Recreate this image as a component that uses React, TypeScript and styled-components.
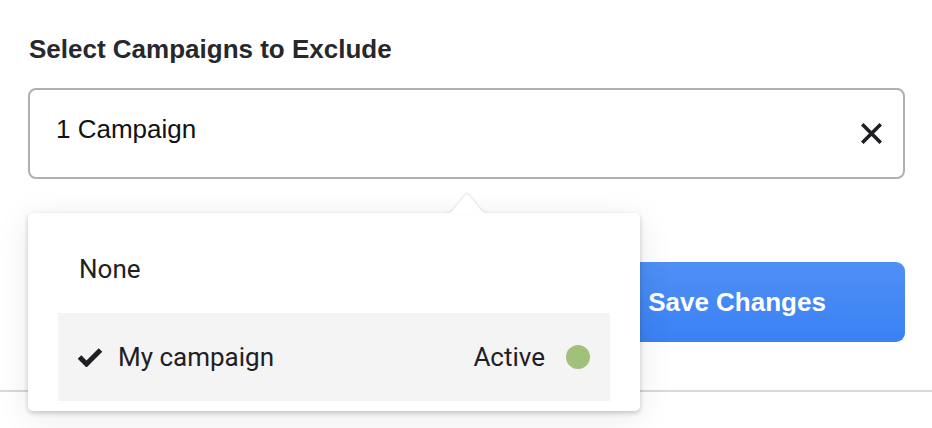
import styled, { createGlobalStyle } from 'styled-components'

const GlobalStyle = createGlobalStyle`
    html, body {
        margin: 0;
        padding: 0;
        background: #fff;
    }
    body {
        font-family: 'Liberation Sans', Arial, sans-serif;
        width: 932px;
        height: 428px;
        overflow: hidden;
    }
`
const Page = styled.div`
    display: flex;
    flex-direction: column;
`
const Content = styled.div`
    display: flex;
    flex-direction: column;
    padding: 34px 27px 0 28px;
`
const Heading = styled.h2`
    margin: 0 0 0 1px;
    font-family: 'Liberation Sans', Arial, sans-serif;
    font-weight: 700;
    font-size: 26px;
    line-height: 30px;
    color: #27282d;
`
const Field = styled.div`
    position: relative;
    margin-top: 24px;
`
const InputBox = styled.div`
    box-sizing: border-box;
    height: 91px;
    display: flex;
    align-items: center;
    justify-content: space-between;
    padding: 0 21px 0 26px;
    border: 2px solid #b0b0b0;
    border-radius: 8px;
    background: #fff;
`
const Value = styled.span`
    font-family: 'Liberation Sans', Arial, sans-serif;
    font-size: 26px;
    color: #111;
    margin-bottom: 8px;
`
const ClearButton = styled.button`
    display: flex;
    padding: 0;
    border: 0;
    background: none;
    cursor: pointer;
`
const Popover = styled.div`
    position: absolute;
    z-index: 2;
    left: 0;
    top: 125px;
    width: 612px;
    box-sizing: border-box;
    padding: 12px 30px 10px;
    background: #fff;
    border-radius: 5px;
    box-shadow: 0 2px 5px rgba(0, 0, 0, 0.2), 0 6px 34px rgba(0, 0, 0, 0.09);
`
const Caret = styled.svg`
    position: absolute;
    left: 416px;
    top: -21px;
    filter: drop-shadow(0 -1px 1px rgba(0, 0, 0, 0.12));
`
const Option = styled.div<{ selected?: boolean }>`
    height: 88px;
    display: flex;
    align-items: center;
    gap: 15px;
    padding: 0 20px 0 ${(p) => (p.selected ? '19px' : '21px')};
    background: ${(p) => (p.selected ? '#f4f4f4' : '#fff')};
    font-family: Roboto, 'Liberation Sans', sans-serif;
    font-size: 26px;
    color: #1f2024;
    cursor: pointer;
`
const OptionLabel = styled.span`
    flex: 1;
`
const Status = styled.span`
    display: flex;
    align-items: center;
    gap: 21px;
`
const Dot = styled.span<{ color: string }>`
    width: 24px;
    height: 24px;
    border-radius: 50%;
    background: ${(p) => p.color};
`
const Actions = styled.div`
    display: flex;
    justify-content: flex-end;
    margin-top: 83px;
`
const SaveButton = styled.button`
    width: 336px;
    height: 80px;
    border: 0;
    border-radius: 9px;
    background: linear-gradient(#4f90f4, #3a81f5);
    color: #fff;
    font-family: 'Liberation Sans', Arial, sans-serif;
    font-weight: 700;
    font-size: 26px;
    cursor: pointer;
`
const Divider = styled.div`
    margin-top: 48px;
    border-top: 2px solid #d8d8d8;
`

const campaigns = [
    { id: 1, name: 'My campaign', status: 'Active', color: '#a1c17b' },
]

const App = () => {
    return (
        <Page>
            <GlobalStyle />
            <Content>
                <Heading>Select Campaigns to Exclude</Heading>
                <Field>
                    <InputBox>
                        <Value>1 Campaign</Value>
                        <ClearButton aria-label="Clear">
                            <svg width="21" height="21" viewBox="0 0 21 21">
                                <path d="M2.5 2.5 L18.5 18.5 M18.5 2.5 L2.5 18.5" stroke="#1e1f23" strokeWidth="3.6" strokeLinecap="square" />
                            </svg>
                        </ClearButton>
                    </InputBox>
                    <Popover>
                        <Caret width="46" height="22" viewBox="0 0 46 22">
                            <path d="M0 22 Q6 22 10 17 L20.5 4 Q23 1 25.5 4 L36 17 Q40 22 46 22 Z" fill="#fff" />
                        </Caret>
                        <Option>None</Option>
                        {campaigns.map((c) =>
                            <Option key={c.id} selected>
                                <svg width="26" height="20" viewBox="0 0 26 20">
                                    <polyline points="2.5,10 9.5,17 23.5,3" fill="none" stroke="#1e1f23" strokeWidth="5" />
                                </svg>
                                <OptionLabel>{c.name}</OptionLabel>
                                <Status>
                                    {c.status}
                                    <Dot color={c.color} />
                                </Status>
                            </Option>
                        )}
                    </Popover>
                </Field>
                <Actions>
                    <SaveButton>Save Changes</SaveButton>
                </Actions>
            </Content>
            <Divider />
        </Page>
    )
}

export default App
